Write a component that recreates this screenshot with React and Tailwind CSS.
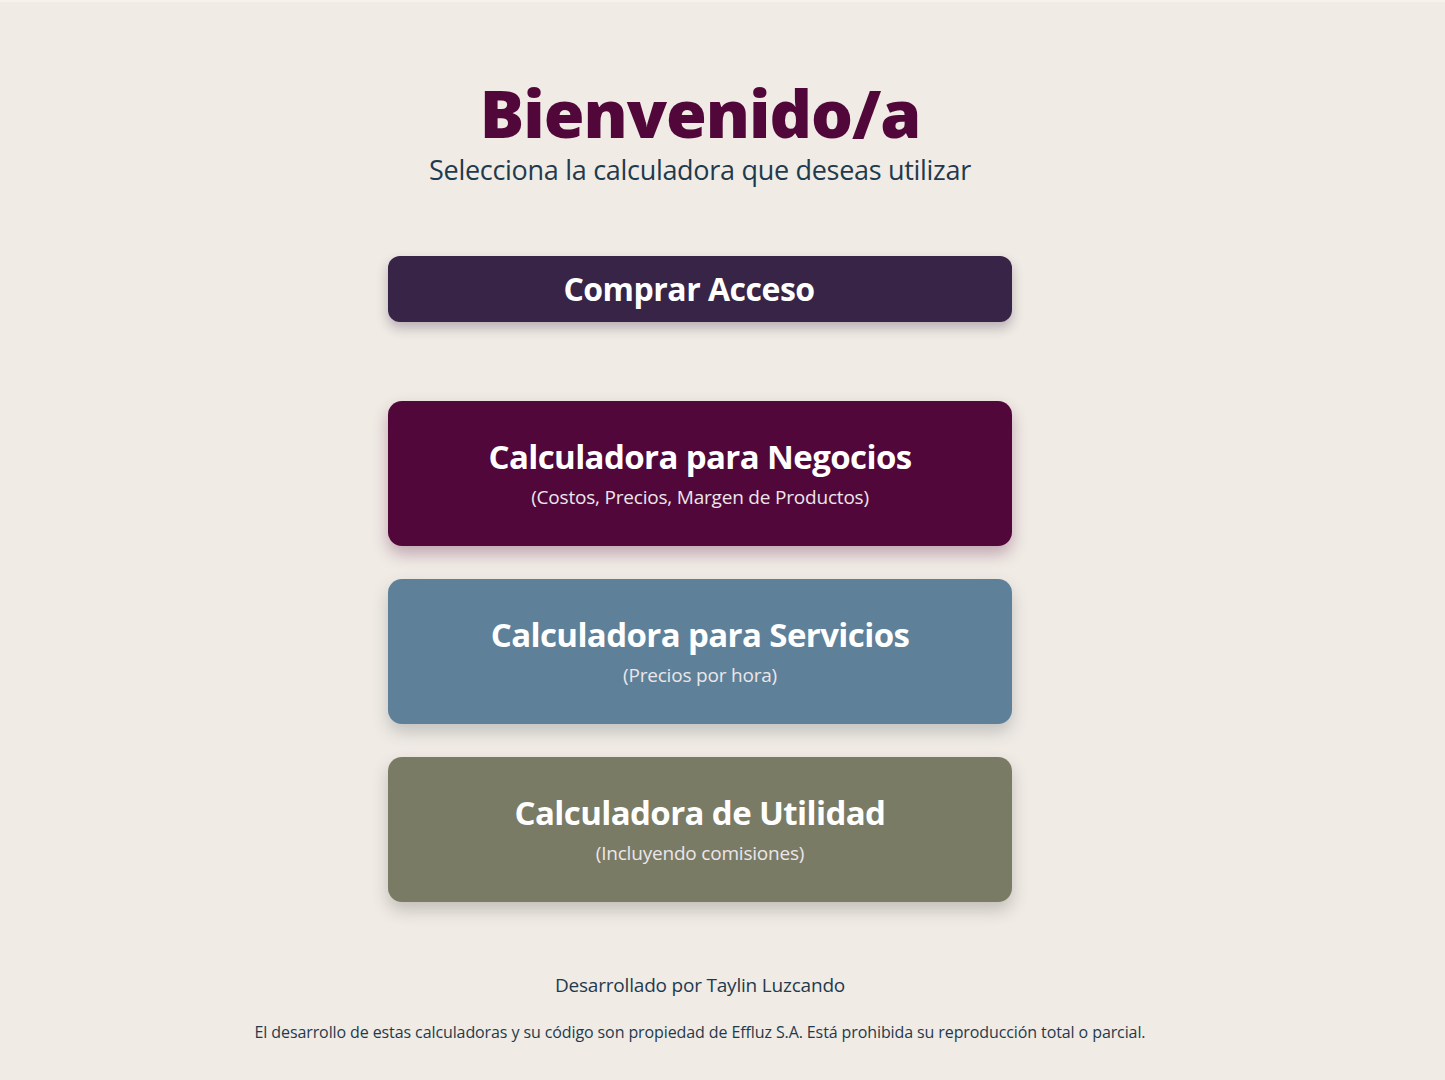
import React from 'react'

const calculadoras = [
  { titulo: 'Calculadora para Negocios', sub: '(Costos, Precios, Margen de Productos)', color: 'bg-[#52073a] shadow-[0_8px_16px_rgba(82,7,58,0.3)]' },
  { titulo: 'Calculadora para Servicios', sub: '(Precios por hora)', color: 'bg-[#5e8199] shadow-[0_8px_16px_rgba(60,70,80,0.25)]' },
  { titulo: 'Calculadora de Utilidad', sub: '(Incluyendo comisiones)', color: 'bg-[#7a7b65] shadow-[0_8px_16px_rgba(60,60,50,0.25)]' },
]

const App = () => {
  return (
    <div className="min-h-screen bg-[#f0ebe5] border-t-2 border-[#f6f3ef] font-['Open_Sans',sans-serif]">
      <div className="w-[1400px] flex flex-col items-center">
        <h1 className="mt-[76px] text-[66px] leading-[68px] font-extrabold tracking-[-1px] text-[#52073a]">Bienvenido/a</h1>
        <p className="mt-[9px] text-[27px] leading-[30px] text-[#1f3a4d] tracking-[-0.3px]">Selecciona la calculadora que deseas utilizar</p>

        <button className="mt-[71px] w-[624px] h-[66px] pr-[22px] rounded-xl bg-[#372447] text-white text-[32px] font-bold tracking-[-0.5px] shadow-[0_6px_12px_rgba(55,36,71,0.3)]">
          Comprar Acceso
        </button>

        <div className="mt-[79px] flex flex-col gap-[33px]">
          {calculadoras.map((c) => (
            <button key={c.titulo} className={`w-[624px] h-[145px] rounded-[14px] text-white flex flex-col items-center justify-center ${c.color}`}>
              <span className="mt-[-2px] text-[33px] leading-[42px] font-bold tracking-[-0.6px]">{c.titulo}</span>
              <span className="mt-[6px] text-[19px] leading-[26px] text-[#ece6ea] tracking-[-0.2px]">{c.sub}</span>
            </button>
          ))}
        </div>

        <p className="mt-[69px] text-[19px] leading-[28px] text-[#1f3a4d] tracking-[-0.2px]">Desarrollado por Taylin Luzcando</p>
        <p className="mt-[21px] text-[16px] leading-[24px] text-[#1f3a4d] tracking-[-0.1px]">El desarrollo de estas calculadoras y su código son propiedad de Effluz S.A. Está prohibida su reproducción total o parcial.</p>
      </div>
    </div>
  )
}

export default App
